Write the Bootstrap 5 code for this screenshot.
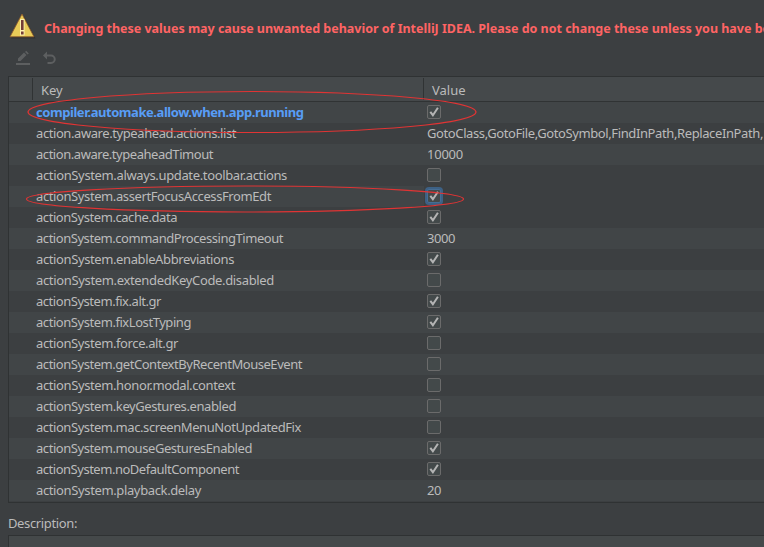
<!DOCTYPE html>
<html lang="en">
<head>
<meta charset="utf-8">
<meta name="viewport" content="width=device-width, initial-scale=1">
<title>Registry</title>
<link href="https://cdn.jsdelivr.net/npm/bootstrap@5.3.0/dist/css/bootstrap.min.css" rel="stylesheet">
<style>
body{background:#3c3f41;color:#bbb;font:13px/21px "Noto Sans",sans-serif;width:764px;height:547px}
.warning{height:48px;padding:10px 0 0 7px}
.warning-text{color:#ff6464;font-weight:700;font-size:12.5px;margin:8px 0 0 6px}
.tools{height:28px;padding:2px 0 0 14px}
.registry{margin-left:8px;height:427px;border:1px solid #2f3233;border-right:0}
.head{height:25px;border-bottom:1px solid #303334;background:#45494b}
.head>div{height:22px;margin-top:1px;line-height:24px}
.gutter{width:24px;border-right:1px solid #303334}
.key-head{width:391px;padding-left:8px;border-right:1px solid #303334}
.val-head{padding-left:8px}
.entry{height:21px;padding-left:27px}
.entry:nth-child(odd){background:#414547}
.entry:nth-child(even){background:#3c3f41}
.key{width:388px}
.val{padding-left:3px}
.changed{color:#589df6;font-weight:700}
.active .val{background:#3c3f41}
.check{width:14px;height:14px;margin-top:3px;border:1px solid #6b6b6b;border-radius:2px;background:#43494a}
.active .check{border-color:#466d94;box-shadow:0 0 0 2px #3d6185}
.details{margin:10px 0 0 8px;height:34px}
.details-box{margin-top:1px;height:14px;border:1px solid #2f3233;border-right:0;background:#45494a}
</style>
<script src="https://cdn.jsdelivr.net/npm/bootstrap@5.3.0/dist/js/bootstrap.bundle.min.js"></script>
</head>
<body class="overflow-hidden position-relative">
<svg width="0" height="0" class="position-absolute"><symbol id="tick" viewBox="0 0 12 12"><path d="M2.300 5.800 4.900 9.200 9.900 1.800" fill="none" stroke="#b4b4b4" stroke-width="2"/></symbol></svg>
<div class="warning d-flex">
<svg class="flex-shrink-0" width="31" height="31" viewBox="0 0 31 31"><path d="M4 28.500 17 6l11.500 22.500z" fill="#242627" opacity=".5"/><path d="M15 4 27 26.800H3z" fill="#e8cb58" stroke="#8c572a" stroke-width=".8"/><path d="M13 9h4.500v16.500H13z" fill="#fff0b0"/><path d="M14 10h2.600v10H14zM14 21.500h2.600v3H14z" fill="#743c36"/></svg>
<div class="warning-text text-nowrap"><span data-w="726">Changing these values may cause unwanted behavior of IntelliJ IDEA. Please do not change these unless you have be</span></div>
</div>
<div class="tools d-flex">
<svg width="18" height="17" viewBox="0 0 18 17"><path d="M2 13h14v2H2zM4 11V8.500l6-6L12.500 5l-6 6zM11 2l1.200-1.200 2.600 2.600-1.200 1.200z" fill="#5d5f60"/></svg>
<svg class="ms-2" width="20" height="17" viewBox="0 0 20 17"><path d="M7 1.500v8L3 5.500z" fill="#5d5f60"/><path d="M6 5.500h5a3.700 3.700 0 0 1 0 7.500H7.500" fill="none" stroke="#5d5f60" stroke-width="2"/></svg>
</div>
<div class="registry">
<div class="head d-flex"><div class="gutter"></div><div class="key-head">Key</div><div class="val-head">Value</div></div>
<div id="entries"></div>
</div>
<div class="details"><div class="details-label"><span data-w="69">Description:</span></div><div class="details-box"></div></div>
<svg class="position-absolute top-0 start-0" width="764" height="547" fill="none" stroke="#e03434" stroke-width="1.2"><ellipse cx="252" cy="112" rx="224" ry="20.500"/><ellipse cx="245" cy="199" rx="218.500" ry="13"/></svg>
<script>
// Each entry: key, value (true/false draws a checkbox), key width in px
const entries = [
["compiler.automake.allow.when.app.running",true,267.5],
["action.aware.typeahead.actions.list","GotoClass,GotoFile,GotoSymbol,FindInPath,ReplaceInPath,",200],
["action.aware.typeaheadTimout","10000",177],
["actionSystem.always.update.toolbar.actions",false,251],
["actionSystem.assertFocusAccessFromEdt",true,235],
["actionSystem.cache.data",true,141],
["actionSystem.commandProcessingTimeout","3000",247],
["actionSystem.enableAbbreviations",true,198],
["actionSystem.extendedKeyCode.disabled",false,238],
["actionSystem.fix.alt.gr",true,125],
["actionSystem.fixLostTyping",true,155],
["actionSystem.force.alt.gr",false,142],
["actionSystem.getContextByRecentMouseEvent",false,266],
["actionSystem.honor.modal.context",false,199],
["actionSystem.keyGestures.enabled",false,200],
["actionSystem.mac.screenMenuNotUpdatedFix",false,265],
["actionSystem.mouseGesturesEnabled",true,216],
["actionSystem.noDefaultComponent",true,203],
["actionSystem.playback.delay","20",165]];
const valueWidths = {"10000":36,"3000":28,"20":14};
document.getElementById("entries").innerHTML = entries.map(([k,v,w],i) =>
`<div class="entry d-flex${i===4?" active":""}"><div class="key text-nowrap${i===0?" changed":""}"><span data-w="${w}">${k}</span></div><div class="val flex-grow-1 text-nowrap">${typeof v==="string"?`<span data-w="${valueWidths[v]||336}">${v}</span>`:`<div class="check d-flex">${v?'<svg width="12" height="12"><use href="#tick"/></svg>':""}</div>`}</div></div>`).join("");
// Space each label's letters to fill its width
document.querySelectorAll("[data-w]").forEach(s => {
  s.style.letterSpacing = (s.dataset.w - s.getBoundingClientRect().width) / s.textContent.length + "px";
});
</script>
</body>
</html>
